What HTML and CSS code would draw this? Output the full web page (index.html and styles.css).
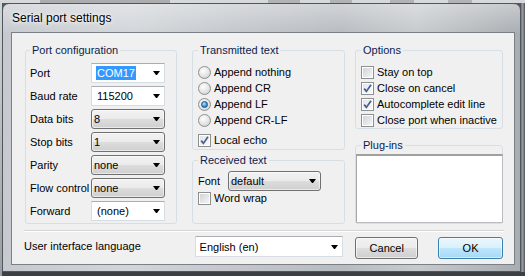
FILE: index.html
```html
<!DOCTYPE html>
<html lang="en">
<head>
    <meta charset="UTF-8">
    <title>Serial port settings</title>
    <link rel="stylesheet" href="styles.css">
</head>
<body>
<div class="screen">
    <div class="behind"></div>
    <div class="desk">
        <div class="left-edge"></div>
        <div class="window">
            <div class="titlebar">Serial port settings</div>
            <div class="client">
                <div class="main">
                    <fieldset class="box port">
                        <legend>Port configuration</legend>
                        <div class="rows">
                            <span>Port</span>
                            <div class="combo edit"><span class="sel">COM17</span><i class="arrow"></i></div>
                            <span>Baud rate</span>
                            <div class="combo edit"><span>115200</span><i class="arrow"></i></div>
                            <span>Data bits</span>
                            <div class="combo list"><span>8</span><i class="arrow"></i></div>
                            <span>Stop bits</span>
                            <div class="combo list"><span>1</span><i class="arrow"></i></div>
                            <span>Parity</span>
                            <div class="combo list"><span>none</span><i class="arrow"></i></div>
                            <span>Flow control</span>
                            <div class="combo list"><span>none</span><i class="arrow"></i></div>
                            <span>Forward</span>
                            <div class="combo edit"><span>(none)</span><i class="arrow"></i></div>
                        </div>
                    </fieldset>

                    <div class="col mid">
                        <fieldset class="box transmitted">
                            <legend>Transmitted text</legend>
                            <div class="opt"><i class="radio"></i>Append nothing</div>
                            <div class="opt"><i class="radio"></i>Append CR</div>
                            <div class="opt"><i class="radio on"></i>Append LF</div>
                            <div class="opt"><i class="radio"></i>Append CR-LF</div>
                            <div class="opt echo"><i class="check on"><svg viewBox="0 0 11 11" width="11" height="11"><path d="M2.2 5.6 L4.4 8.4 L9 1.8" fill="none" stroke="#4a5f8c" stroke-width="1.7"/></svg></i>Local echo</div>
                        </fieldset>
                        <fieldset class="box received">
                            <legend>Received text</legend>
                            <div class="font-row">
                                <span class="font-lbl">Font</span>
                                <div class="combo list font"><span>default</span><i class="arrow"></i></div>
                            </div>
                            <div class="opt wrap"><i class="check"></i>Word wrap</div>
                        </fieldset>
                    </div>

                    <div class="col right">
                        <fieldset class="box options">
                            <legend>Options</legend>
                            <div class="opt"><i class="check"></i>Stay on top</div>
                            <div class="opt"><i class="check on"><svg viewBox="0 0 11 11" width="11" height="11"><path d="M2.2 5.6 L4.4 8.4 L9 1.8" fill="none" stroke="#4a5f8c" stroke-width="1.7"/></svg></i>Close on cancel</div>
                            <div class="opt"><i class="check on"><svg viewBox="0 0 11 11" width="11" height="11"><path d="M2.2 5.6 L4.4 8.4 L9 1.8" fill="none" stroke="#4a5f8c" stroke-width="1.7"/></svg></i>Autocomplete edit line</div>
                            <div class="opt"><i class="check"></i>Close port when inactive</div>
                        </fieldset>
                        <fieldset class="box plugins">
                            <legend>Plug-ins</legend>
                            <div class="listbox"></div>
                        </fieldset>
                    </div>
                </div>

                <div class="sep"></div>

                <div class="bottom">
                    <span class="lang-lbl">User interface language</span>
                    <div class="combo edit lang"><span>English (en)</span><i class="arrow"></i></div>
                    <div class="btn cancel">Cancel</div>
                    <div class="btn ok">OK</div>
                </div>
            </div>
        </div>
        <div class="right-edge"></div>
    </div>
</div>
</body>
</html>
```

FILE: styles.css
```css
body {
    margin: 0;
    font-family: "Liberation Sans", Arial, sans-serif;
    font-size: 11px;
    color: #000;
}
.screen {
    width: 525px;
    height: 276px;
    overflow: hidden;
    background: linear-gradient(#55595d, #3c4044);
}
/* blurred strip of the window behind */
.behind {
    height: 3px;
    background:
        linear-gradient(90deg, transparent 40px, rgba(90,90,90,0.35) 40px, rgba(90,90,90,0.35) 170px, transparent 170px,
            transparent 268px, rgba(90,90,90,0.3) 268px, rgba(90,90,90,0.3) 300px, transparent 300px,
            transparent 330px, rgba(90,90,90,0.3) 330px, rgba(90,90,90,0.3) 352px, transparent 352px,
            transparent 390px, rgba(90,90,90,0.3) 390px, rgba(90,90,90,0.3) 414px, transparent 414px,
            transparent 448px, rgba(90,90,90,0.3) 448px, rgba(90,90,90,0.3) 472px, transparent 472px),
        #d6d9db;
    filter: blur(0.6px);
}
.desk {
    display: flex;
    height: 273px;
}
.left-edge {
    width: 2px;
    background: linear-gradient(#d2d5d8, #9a9ea2);
}
.right-edge {
    flex: 1;
    height: 269px;
    background: linear-gradient(90deg, #6e7276, #9a9ea2 40%, #505458);
}

/* glass frame */
.window {
    width: 519px;
    height: 269px;
    box-sizing: border-box;
    border: 1px solid #50565c;
    border-radius: 7px 7px 0 0;
    padding: 0 5px 0 8px;
    background:
        linear-gradient(rgba(255,255,255,0.35), rgba(255,255,255,0) 30px),
        linear-gradient(90deg, #c6cacf, #d2d6da 25%, #c3c7cc 45%, #b7bcc1 65%, #c6cacd 80%, #a8adb2);
}
.titlebar {
    height: 28px;
    line-height: 29px;
    padding-left: 1px;
    font-size: 12px;
    text-shadow: 0 0 6px #fff, 0 0 3px rgba(255,255,255,0.9);
}
.client {
    height: 233px;
    box-sizing: border-box;
    border: 1px solid #7a8086;
    background: #f0f0f0;
    padding: 11px 11px 0 13px;
}

.main {
    display: flex;
    height: 180px;
}
.col {
    display: flex;
    flex-direction: column;
}

/* group boxes */
.box {
    margin: 0;
    min-width: 0;
    border: 1px solid #d5dfe5;
    border-radius: 3px;
    box-sizing: border-box;
}
.box legend {
    padding: 0 2px;
    line-height: 13px;
    color: #0c1c4f;
}
.port {
    width: 152px;
    margin-right: 15px;
    padding: 6px 11px 1px 4px;
}
.mid {
    width: 153px;
    margin-right: 10px;
}
.right {
    width: 148px;
}
.transmitted {
    padding: 7px 5px 1px 5px;
    margin-bottom: 4px;
}
.received {
    flex: 1;
    padding: 4px 5px 0 5px;
}
.options {
    padding: 7px 5px 0 5px;
    margin-bottom: 10px;
}
.plugins {
    flex: 1;
    padding: 0;
}
.plugins legend {
    margin-left: 5px;
}
.listbox {
    margin: 2px -1px 0 0;
    height: 69px;
    box-sizing: border-box;
    background: #fff;
    border: 1px solid #b9bcc0;
    border-top: 2px solid #a0a0a0;
    border-left-color: #a8a8a8;
}

.rows {
    display: grid;
    grid-template-columns: 61px 74px;
    grid-auto-rows: 20px;
    row-gap: 3px;
    align-items: center;
}

/* combo boxes */
.combo {
    display: flex;
    align-items: center;
    height: 20px;
    box-sizing: border-box;
    white-space: nowrap;
}
.combo.edit {
    background: #fff;
    border: 1px solid #d7dde5;
    border-top-color: #abadb3;
    padding-left: 5px;
}
.combo.list {
    border: 1px solid #707070;
    border-radius: 3px;
    padding-left: 2px;
    background: linear-gradient(#f2f2f2, #ebebeb 50%, #dddddd 50%, #cfcfcf);
    box-shadow: inset 0 0 0 1px rgba(255,255,255,0.55);
}
.sel {
    background: #3399ff;
    color: #fff;
    padding: 1px 1px;
    margin-left: -1px;
}
.arrow {
    margin-left: auto;
    margin-right: 4px;
    width: 1px;
    height: 0;
    border-left: 3px solid transparent;
    border-right: 3px solid transparent;
    border-top: 4px solid #000;
}

/* radios and checks */
.opt {
    display: flex;
    align-items: center;
    height: 16px;
    gap: 3px;
    white-space: nowrap;
}
.echo {
    margin-top: 4px;
}
.wrap {
    height: 14px;
}
.radio {
    width: 13px;
    height: 13px;
    box-sizing: border-box;
    border-radius: 50%;
    border: 1px solid #8e8f8f;
    background: radial-gradient(circle at 40% 35%, #ffffff, #e8e8e8 45%, #c9c9c9);
    display: flex;
    align-items: center;
    justify-content: center;
}
.radio.on::after {
    content: "";
    width: 5px;
    height: 5px;
    border-radius: 50%;
    border: 1px solid #1c5180;
    background: radial-gradient(circle at 40% 35%, #b6e2fa, #3d8fd6 60%, #1b5a9c);
}
.check {
    width: 13px;
    height: 13px;
    box-sizing: border-box;
    border: 1px solid #8e8f8f;
    background: linear-gradient(135deg, #cdd1d6, #f7f7f7);
    box-shadow: inset 0 0 0 1px #fff;
    display: flex;
    align-items: center;
    justify-content: center;
}
.check.on {
    background: linear-gradient(135deg, #dfe3e8, #fbfbfb);
}

.font-row {
    display: flex;
    align-items: center;
    height: 20px;
}
.font-lbl {
    width: 30px;
}
.combo.font {
    width: 93px;
}

/* bottom */
.sep {
    margin: 6px -1px 0 -1px;
    border-top: 1px solid #d5d5d5;
    border-bottom: 1px solid #fff;
}
.bottom {
    display: flex;
    align-items: flex-start;
    margin: 4px 0 0 -1px;
}
.lang-lbl {
    width: 171px;
    line-height: 21px;
}
.combo.lang {
    width: 149px;
    height: 21px;
    padding-left: 4px;
}
.btn {
    height: 22px;
    line-height: 20px;
    box-sizing: border-box;
    margin-top: 1px;
    text-align: center;
    border-radius: 3px;
}
.cancel {
    width: 63px;
    margin-left: 12px;
    border: 1px solid #707070;
    background: linear-gradient(#f2f2f2, #ebebeb 50%, #dddddd 50%, #cfcfcf);
    box-shadow: inset 0 0 0 1px rgba(255,255,255,0.6);
}
.ok {
    width: 65px;
    margin-left: 20px;
    border: 1px solid #3c7fb1;
    background: linear-gradient(#eaf6fd, #d9f0fc 50%, #bee6fd 50%, #a7d9f5);
    box-shadow: inset 0 0 0 1px rgba(255,255,255,0.5);
}
```
